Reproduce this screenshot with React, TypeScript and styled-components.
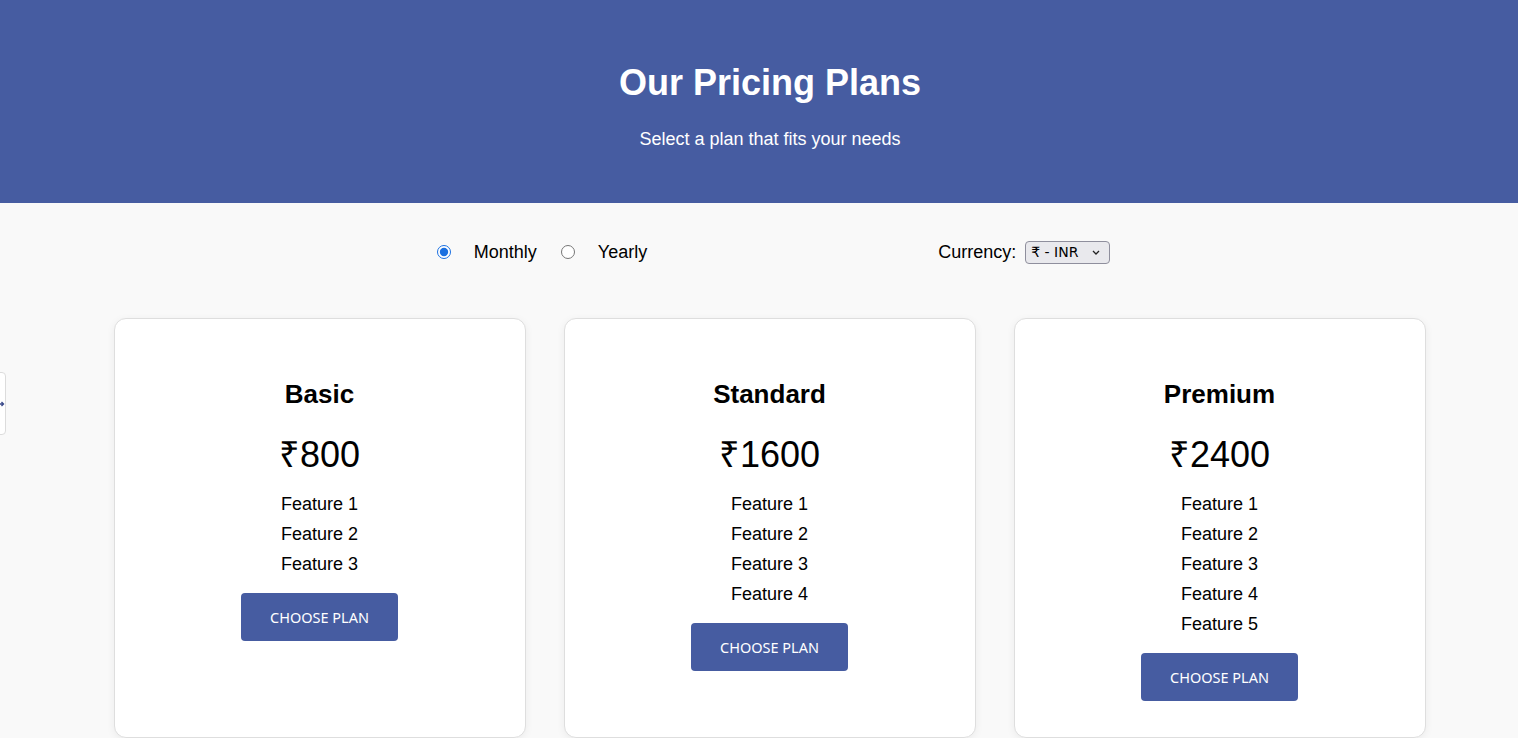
import * as React from "react";
import styled, { createGlobalStyle } from "styled-components";

const BRAND = "#465ca1";

const chevron =
  "url(\"data:image/svg+xml;utf8,<svg xmlns='http://www.w3.org/2000/svg' width='8' height='5' viewBox='0 0 8 5'><path d='M1 1l3 3 3-3' stroke='%23222' stroke-width='1.3' fill='none'/></svg>\")";

const GlobalStyle = createGlobalStyle`
  html, body {
    margin: 0;
    padding: 0;
    background: #f9f9f9;
    font-family: "Liberation Sans", Arial, sans-serif;
    color: #000;
  }
`;

const Header = styled.header`
  background: ${BRAND};
  color: #fff;
  height: 203px;
  box-sizing: border-box;
  padding: 62px 0 0 22px;
  text-align: center;
`;

const Title = styled.h1`
  margin: 0;
  font-size: 36px;
  line-height: 42px;
  font-weight: 700;
`;

const Subtitle = styled.p`
  margin: 24px 0 0;
  font-size: 18px;
  line-height: 22px;
`;

const Controls = styled.div`
  display: flex;
  justify-content: center;
  align-items: center;
  height: 98px;
  padding-left: 29px;
  gap: 291px;
  font-size: 18px;
`;

const BillingGroup = styled.div`
  display: flex;
  align-items: center;
`;

const RadioLabel = styled.label`
  display: flex;
  align-items: center;
  gap: 23px;
  margin-right: 24px;

  &:last-child {
    margin-right: 0;
  }

  input {
    margin: 0;
    width: 14px;
    height: 14px;
    accent-color: #1a6fe0;
  }
`;

const CurrencyGroup = styled.label`
  display: flex;
  align-items: center;
  gap: 9px;
`;

const CurrencySelect = styled.select`
  appearance: none;
  font-family: "DejaVu Sans", sans-serif;
  font-size: 14px;
  color: #000;
  height: 23px;
  width: 85px;
  border: 1px solid #8f8f9d;
  border-radius: 4px;
  background: #e9e9ed ${chevron} no-repeat right 9px center;
  padding: 0 18px 0 5px;
`;

const Cards = styled.div`
  display: flex;
  justify-content: center;
  align-items: stretch;
  gap: 38px;
  padding: 17px 0 0 21px;
`;

const Card = styled.div`
  width: 412px;
  box-sizing: border-box;
  background: #fff;
  border: 1px solid #dedede;
  border-radius: 12px;
  box-shadow: 0 2px 8px rgba(0, 0, 0, 0.06);
  padding: 60px 20px 36px;
  display: flex;
  flex-direction: column;
  align-items: center;
  text-align: center;
`;

const PlanName = styled.h2`
  margin: 0;
  font-size: 26px;
  line-height: 30px;
  font-weight: 700;
`;

const Price = styled.div`
  margin-top: 25px;
  font-size: 36px;
  line-height: 42px;
`;

const Features = styled.ul`
  list-style: none;
  margin: 13px 0 0;
  padding: 0;
  font-size: 18px;
  line-height: 30px;
`;

const ChooseButton = styled.button`
  margin-top: 14px;
  width: 157px;
  height: 48px;
  border: none;
  border-radius: 4px;
  background: ${BRAND};
  color: #fff;
  font-family: "Noto Sans", sans-serif;
  font-size: 14.5px;
  text-transform: uppercase;
  cursor: pointer;
`;

const SideTab = styled.div`
  position: fixed;
  left: -10px;
  top: 372px;
  width: 16px;
  height: 63px;
  background: #fff;
  border: 1px solid #dcdcdc;
  border-radius: 4px;
  display: flex;
  align-items: center;
  justify-content: flex-end;
  box-sizing: border-box;
`;

const plans = [
  { name: "Basic", price: 800, features: 3 },
  { name: "Standard", price: 1600, features: 4 },
  { name: "Premium", price: 2400, features: 5 },
];

export default function App() {
  const [billing, setBilling] = React.useState("monthly");
  const [currency, setCurrency] = React.useState("INR");

  return (
    <>
      <GlobalStyle />
      <Header>
        <Title>Our Pricing Plans</Title>
        <Subtitle>Select a plan that fits your needs</Subtitle>
      </Header>
      <Controls>
        <BillingGroup>
          <RadioLabel>
            <input
              type="radio"
              name="billing"
              checked={billing === "monthly"}
              onChange={() => setBilling("monthly")}
            />
            Monthly
          </RadioLabel>
          <RadioLabel>
            <input
              type="radio"
              name="billing"
              checked={billing === "yearly"}
              onChange={() => setBilling("yearly")}
            />
            Yearly
          </RadioLabel>
        </BillingGroup>
        <CurrencyGroup>
          Currency:
          <CurrencySelect
            value={currency}
            onChange={(e) => setCurrency(e.target.value)}
          >
            <option value="INR">₹ - INR</option>
            <option value="USD">$ - USD</option>
            <option value="EUR">€ - EUR</option>
          </CurrencySelect>
        </CurrencyGroup>
      </Controls>
      <Cards>
        {plans.map((plan) => (
          <Card key={plan.name}>
            <PlanName>{plan.name}</PlanName>
            <Price>₹{plan.price}</Price>
            <Features>
              {Array.from({ length: plan.features }, (_, i) => (
                <li key={i}>Feature {i + 1}</li>
              ))}
            </Features>
            <ChooseButton>Choose Plan</ChooseButton>
          </Card>
        ))}
      </Cards>
      <SideTab>
        <svg width="6" height="8" viewBox="0 0 6 8">
          <path d="M0 4h4M2.5 2l2 2-2 2" stroke="#3b4a8a" strokeWidth="1.4" fill="none" />
        </svg>
      </SideTab>
    </>
  );
}
